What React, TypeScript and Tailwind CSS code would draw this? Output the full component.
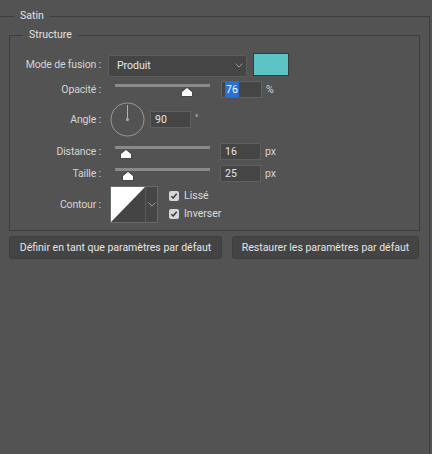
import React from 'react';

const font = { fontFamily: 'Roboto, "Liberation Sans", sans-serif' };

function Slider({ pos }: { pos: number }) {
  return (
    <div className="relative h-[17px] w-[95px] shrink-0">
      <div className="absolute left-0 right-0 top-[3px] h-[3px] bg-[#8a8a8a]" />
      <svg
        className="absolute top-[6px]"
        style={{ left: pos - 6 }}
        width="12"
        height="10"
        viewBox="0 0 12 10"
      >
        <path d="M6 0.5 L11.5 5 L11.5 9.5 L0.5 9.5 L0.5 5 Z" fill="#ffffff" stroke="#2e2e2e" strokeWidth="0.8" />
      </svg>
    </div>
  );
}

function NumField({ value, selected }: { value: string; selected?: boolean }) {
  return (
    <div
      className={`flex h-[17px] w-[41px] shrink-0 items-center border bg-[#454545] pl-[3px] text-[10.5px] text-[#e6e6e6] ${
        selected ? 'border-[#1c6fd6]' : 'border-[#5f5f5f]'
      }`}
    >
      <span className={selected ? 'bg-[#2a6fd8] px-[1px] text-white' : 'px-[1px]'}>{value}</span>
    </div>
  );
}

function Label({ children }: { children: React.ReactNode }) {
  return (
    <div className="w-[91px] shrink-0 text-right text-[10.5px] tracking-[-0.15px] text-[#d4d4d4]">{children}</div>
  );
}

function Check({ label }: { label: string }) {
  return (
    <div className="flex h-[16px] items-center gap-[5px]">
      <div className="flex h-[10px] w-[10px] items-center justify-center rounded-[2px] bg-[#d6d6d6]">
        <svg width="8" height="8" viewBox="0 0 8 8">
          <path d="M1.3 4.2 L3.2 6 L6.7 1.8" fill="none" stroke="#3a3a3a" strokeWidth="1.5" />
        </svg>
      </div>
      <span className="text-[10.5px] text-[#dcdcdc]">{label}</span>
    </div>
  );
}

function Chevron() {
  return (
    <svg width="8" height="5" viewBox="0 0 8 5">
      <path d="M0.5 0.5 L4 4 L7.5 0.5" fill="none" stroke="#9a9a9a" strokeWidth="1" />
    </svg>
  );
}

export default function App() {
  return (
    <div className="flex h-[454px] w-[432px] flex-col overflow-hidden bg-[#535353] pt-[8px]" style={font}>
      <fieldset className="mr-[2px] flex-1 border-t border-r border-[#3d3d3d]">
        <legend className="ml-[14px] px-[6px] text-[10.5px] leading-[16px] text-[#e2e2e2]">Satin</legend>

        <fieldset className="ml-[9px] mr-[9px] mt-[3px] border border-[#3d3d3d] pb-[7px] pt-[10px]">
          <legend className="ml-[13px] px-[6px] text-[10.5px] leading-[16px] text-[#e2e2e2]">Structure</legend>

          {/* Mode de fusion */}
          <div className="flex h-[23px] items-center">
            <Label>Mode de fusion :</Label>
            <div className="ml-[7px] mt-[2px] flex h-[22px] w-[139px] items-center justify-between rounded-[2px] border border-[#5c5c5c] bg-[#454545] pl-[8px] pr-[3px] text-[10.5px] text-[#e6e6e6]">
              <span>Produit</span>
              <Chevron />
            </div>
            <div className="ml-[6px] h-[23px] w-[36px] border border-[#3a3a3a] bg-[#5cc4c4]" />
          </div>

          {/* Opacité */}
          <div className="mt-[5px] flex h-[17px] items-center">
            <Label>Opacité :</Label>
            <div className="ml-[14px] flex items-center">
              <Slider pos={72} />
            </div>
            <div className="ml-[11px]">
              <NumField value="76" selected />
            </div>
            <span className="ml-[4px] text-[10.5px] text-[#d4d4d4]">%</span>
          </div>

          {/* Angle */}
          <div className="mt-[4px] flex h-[35px] items-center">
            <Label>Angle :</Label>
            <svg className="ml-[9px] shrink-0" width="35" height="35" viewBox="0 0 35 35">
              <circle cx="17.5" cy="17.5" r="16.5" fill="none" stroke="#9a9a9a" strokeWidth="1" />
              <line x1="17.5" y1="17.5" x2="17.5" y2="3" stroke="#b0b0b0" strokeWidth="1" />
              <circle cx="17.5" cy="17.5" r="1.5" fill="#b0b0b0" />
            </svg>
            <div className="ml-[5px]">
              <NumField value="90" />
            </div>
            <span className="mb-[1px] ml-[4px] text-[9px] text-[#d4d4d4]">°</span>
          </div>

          {/* Distance */}
          <div className="mt-[6px] flex h-[17px] items-center">
            <Label>Distance :</Label>
            <div className="ml-[14px]">
              <Slider pos={11} />
            </div>
            <div className="ml-[10px]">
              <NumField value="16" />
            </div>
            <span className="ml-[4px] text-[10.5px] text-[#d4d4d4]">px</span>
          </div>

          {/* Taille */}
          <div className="mt-[5px] flex h-[17px] items-center">
            <Label>Taille :</Label>
            <div className="ml-[14px]">
              <Slider pos={13} />
            </div>
            <div className="ml-[10px]">
              <NumField value="25" />
            </div>
            <span className="ml-[4px] text-[10.5px] text-[#d4d4d4]">px</span>
          </div>

          {/* Contour */}
          <div className="mt-[4px] flex h-[37px] items-center">
            <Label>Contour :</Label>
            <div className="ml-[9px] flex h-[37px] border border-[#6a6a6a]">
              <svg width="34" height="35" viewBox="0 0 34 35" className="block">
                <rect width="34" height="35" fill="#444444" />
                <path d="M0 0 L34 0 L0 35 Z" fill="#ffffff" />
              </svg>
              <div className="flex w-[12px] items-center justify-center border-l border-[#5a5a5a] bg-[#464646]">
                <Chevron />
              </div>
            </div>
            <div className="ml-[11px] flex flex-col gap-[2px]">
              <Check label="Lissé" />
              <Check label="Inverser" />
            </div>
          </div>
        </fieldset>

        <div className="ml-[9px] mt-[5px] flex gap-[10px]">
          <button
            type="button"
            className="h-[23px] w-[213px] rounded-[3px] border border-[#3e3e3e] bg-[#444444] text-[10.5px] text-[#e4e4e4]"
          >
            Définir en tant que paramètres par défaut
          </button>
          <button
            type="button"
            className="h-[23px] w-[187px] rounded-[3px] border border-[#3e3e3e] bg-[#444444] text-[10.5px] text-[#e4e4e4]"
          >
            Restaurer les paramètres par défaut
          </button>
        </div>
      </fieldset>
    </div>
  );
}
